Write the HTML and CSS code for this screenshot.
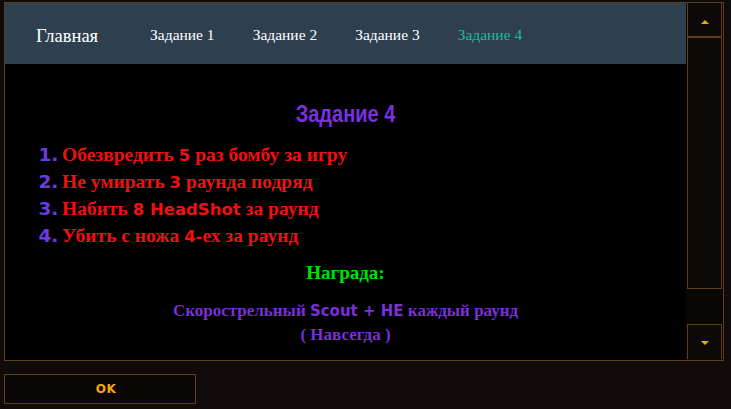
FILE: index.html
```html
<!DOCTYPE html>
<html lang="ru">
<head>
    <meta charset="UTF-8">
    <title>Задание 4</title>
    <link rel="stylesheet" href="styles.css">
</head>
<body>
    <div class="window">
        <div class="page">
            <!-- Navigation -->
            <nav class="navbar">
                <span class="brand">Главная</span>
                <a class="nav_link">Задание 1</a>
                <a class="nav_link">Задание 2</a>
                <a class="nav_link">Задание 3</a>
                <a class="nav_link active">Задание 4</a>
            </nav>

            <!-- Task -->
            <section class="task">
                <h2 class="task_title">Задание 4</h2>
                <ol class="task_list">
                    <li>Обезвредить <span class="lat">5</span> раз бомбу за игру</li>
                    <li>Не умирать <span class="lat">3</span> раунда подряд</li>
                    <li>Набить <span class="lat">8 HeadShot</span> за раунд</li>
                    <li>Убить с ножа <span class="lat">4-</span>ех за раунд</li>
                </ol>
                <h3 class="reward_title">Награда:</h3>
                <p class="reward">Скорострельный <span class="lat">Scout + HE</span> каждый раунд<br>( Навсегда )</p>
            </section>
        </div>

        <!-- Scrollbar -->
        <div class="scrollbar">
            <div class="scroll_btn up"><span class="arrow_up"></span></div>
            <div class="scroll_thumb"></div>
            <div class="scroll_track"></div>
            <div class="scroll_btn down"><span class="arrow_down"></span></div>
        </div>
    </div>

    <button class="ok_button">OK</button>
</body>
</html>
```

FILE: styles.css
```css
body {
    margin: 0;
    padding: 0;
    background-color: #100a0a;
    font-family: "Liberation Serif", serif;
}

.window {
    display: flex;
    width: 718px;
    height: 357px;
    margin: 2px 0 0 4px;
    border: 1px solid #5e3f14;
}

.page {
    flex: 1;
    background-color: #000;
    display: flex;
    flex-direction: column;
}

.navbar {
    display: flex;
    align-items: center;
    height: 61px;
    padding: 3px 0 0 31px;
    box-sizing: border-box;
    background-color: #2e3f50;
}

.brand {
    color: #fff;
    font-size: 18.5px;
    margin-right: 52px;
    position: relative;
    top: 1px;
}

.nav_link {
    color: #fff;
    font-size: 15.5px;
    margin-right: 38px;
}

.nav_link.active {
    color: #1abc9c;
}

.task {
    text-align: center;
}

.lat {
    font-family: "DejaVu Sans", sans-serif;
    font-weight: bold;
}

.task_title {
    font-family: "Liberation Sans", sans-serif;
    font-size: 20px;
    line-height: 24px;
    color: #7b2fe0;
    margin: 37px 0 16px 0;
    transform: scaleY(1.22);
}

.task_list {
    text-align: left;
    margin: 0;
    padding-left: 57px;
    color: #f01010;
    font-size: 19.5px;
    font-weight: bold;
    line-height: 27px;
}

.task_list li {
    height: 27px;
}

.task_list li::marker {
    content: counter(list-item) ".\2009";
    font-family: "DejaVu Sans", sans-serif;
    font-weight: bold;
    font-size: 18.5px;
    color: #6c3ae0;
}

.task_list .lat {
    font-size: 16.5px;
    line-height: 20px;
}

.reward_title {
    color: #00e000;
    font-size: 19px;
    line-height: 22px;
    margin: 13px 0 0 0;
}

.reward {
    color: #7a2fd8;
    font-size: 17px;
    font-weight: bold;
    line-height: 24px;
    margin: 15px 0 0 0;
}

.reward .lat {
    font-size: 15px;
    line-height: 16px;
}

.scrollbar {
    width: 36px;
    display: flex;
    flex-direction: column;
    padding-left: 1px;
    background-color: #0a0606;
}

.scroll_btn {
    width: 33px;
    height: 33px;
    border: 1px solid #5e3f14;
    background-color: #0e0909;
    display: flex;
    justify-content: center;
    align-items: center;
}

.scroll_btn.up {
    height: 33px;
    border-bottom-width: 2px;
    border-top: none;
}

.scroll_thumb {
    width: 33px;
    height: 250px;
    border: 1px solid #5e3f14;
    border-top: none;
    background-color: #0e0909;
}

.scroll_track {
    height: 35px;
}

.scroll_btn.down {
    height: 34px;
    border-bottom: none;
}

.arrow_up {
    width: 0;
    height: 0;
    border-left: 4px solid transparent;
    border-right: 4px solid transparent;
    border-bottom: 4px solid #f7a600;
    margin-top: 5px;
}

.arrow_down {
    width: 0;
    height: 0;
    border-left: 4px solid transparent;
    border-right: 4px solid transparent;
    border-top: 4px solid #f7a600;
    margin-top: 2px;
}

.ok_button {
    display: block;
    margin: 13px 0 0 4px;
    width: 192px;
    height: 30px;
    border: 1px solid #5e3f14;
    background-color: #0b0707;
    color: #f7a600;
    font-family: "DejaVu Sans", sans-serif;
    font-weight: bold;
    font-size: 12px;
    letter-spacing: 0.5px;
    padding: 0 0 0 12px;
}
```
